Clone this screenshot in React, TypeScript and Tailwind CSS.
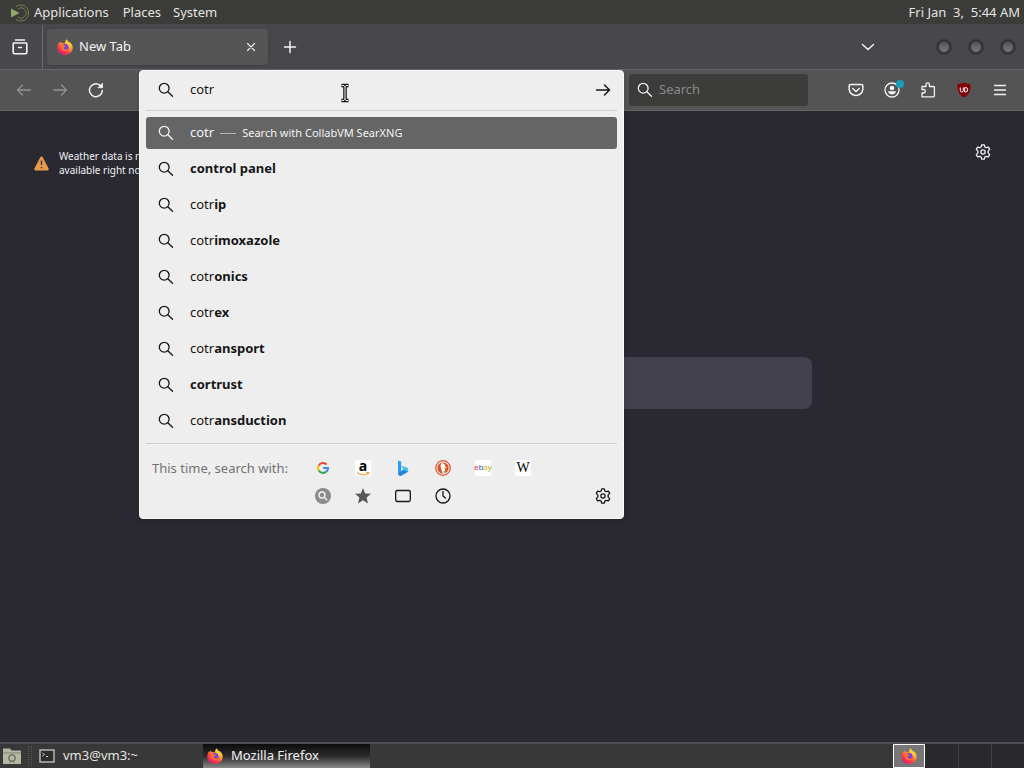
import { useState } from "react";
import type { ReactNode } from "react";

const engineRows = ["Google", "Amazon", "Bing", "DuckDuckGo", "eBay", "Wikipedia"];

const suggestions = [
  { typed: "", rest: "control panel" },
  { typed: "cotr", rest: "ip" },
  { typed: "cotr", rest: "imoxazole" },
  { typed: "cotr", rest: "onics" },
  { typed: "cotr", rest: "ex" },
  { typed: "cotr", rest: "ansport" },
  { typed: "", rest: "cortrust" },
  { typed: "cotr", rest: "ansduction" },
];

function Icon({ children, className = "size-4" }: { children: ReactNode; className?: string }) {
  return (
    <svg
      className={`shrink-0 ${className}`}
      viewBox="0 0 16 16"
      fill="none"
      stroke="currentColor"
      strokeWidth="1.3"
      strokeLinecap="round"
      strokeLinejoin="round"
      aria-hidden="true"
    >
      {children}
    </svg>
  );
}

function SearchIcon() {
  return (
    <Icon>
      <circle cx="6.2" cy="6.2" r="4.9" />
      <path d="M9.8 9.8L14.500 14.300" />
    </Icon>
  );
}

function GearIcon() {
  return (
    <Icon>
      <path d="M6.800.8h2.400l.7 2.200 1.300.7 2.200-.5 1.300 2.200-1.600 1.700v1.800l1.600 1.700-1.300 2.200-2.200-.5-1.300.7-.7 2.200H6.800l-.7-2.200-1.300-.7-2.200.5-1.300-2.200 1.600-1.700V7.100L1.300 5.400l1.300-2.200 2.200.5L6.100 3z" />
      <circle cx="8" cy="8" r="2.100" />
    </Icon>
  );
}

function FirefoxLogo({ className = "size-4" }: { className?: string }) {
  return (
    <svg className={`shrink-0 ${className}`} viewBox="0 0 16 16" aria-hidden="true">
      <defs>
        <linearGradient id="fox" x1="0.85" y1="0.05" x2="0.2" y2="0.95">
          <stop offset="0" stopColor="#fff04a" />
          <stop offset="0.35" stopColor="#ffa52b" />
          <stop offset="0.65" stopColor="#ff4540" />
          <stop offset="1" stopColor="#e6127c" />
        </linearGradient>
      </defs>
      <path
        d="M10 .3c.3 1.500 1.200 2.200 2.100 3.100l.4-.5C14.600 4.300 16 6.500 15.700 9.200 15.300 13 12 15.800 8 15.800 3.700 15.800.3 12.600.3 8.400c0-2.500.8-4.300 2-5.500l.3 1.300L4 2.500l.7 1.600c1.400-.3 2.300.1 3 .6C7.800 2.800 8.700 1.200 10 .3z"
        fill="url(#fox)"
      />
      <circle cx="8.200" cy="8.600" r="3.500" fill="#7542e5" />
      <path d="M3 6.200c1.300-.8 3-.6 4.300.4l1.500.4c-.2 1-1.500 1.100-2 1.500-.2 1.100.7 2 2 2 1.200 0 1.900-.7 3-.3-.7 1.600-2.300 2.200-3.900 2.200C5 12.400 3.200 9.700 3 6.200z" fill="#ff6a35" />
      <path d="M8.700 4.200c1.800.6 3.300 2 3.200 4.400l1.200-1.100c.1-2.200-1.700-3.500-2.400-5.200z" fill="#ffcf3c" />
    </svg>
  );
}

function EngineLogo({ name }: { name: string }) {
  if (name === "Google") {
    return (
      <svg className="size-3" viewBox="0 0 12 12" fill="none" strokeWidth="2" aria-hidden="true">
        <path d="M9.600 2.500A5 5 0 0 0 1.700 3.500" stroke="#ea4335" />
        <path d="M1.700 3.500a5 5 0 0 0 0 5" stroke="#fbbc05" />
        <path d="M1.700 8.500a5 5 0 0 0 7.300 1.400" stroke="#34a853" />
        <path d="M9 9.900A4.600 4.600 0 0 0 11 6H6.200" stroke="#4285f4" />
      </svg>
    );
  }
  if (name === "Amazon") {
    return (
      <span className="relative flex size-4 items-center justify-center bg-white">
        <span className="-mt-1 font-['Open_Sans',sans-serif] text-sm leading-4 font-bold text-black">a</span>
        <svg className="absolute inset-x-0 bottom-0 h-1 w-4" viewBox="0 0 16 4" fill="none" stroke="#f5a33a" strokeWidth="1.200" aria-hidden="true">
          <path d="M2 .6q6 4.200 11 .6M11.300.7l2.500-.2-.6 2" />
        </svg>
      </span>
    );
  }
  if (name === "Bing") {
    return (
      <svg className="size-4" viewBox="0 0 16 16" aria-hidden="true">
        <path d="M3 .5l3.200 1.200v9.600L3 13.500z" fill="#2b9df0" />
        <path d="M3 13.200l3.200-2.300 2.400-1.100-1.700-3.900 4.800 1.800c2 .9 2 3.600.3 4.900l-5.700 3.200C4.600 16.200 3 15 3 13.200z" fill="#2584dc" />
        <path d="M6.900 5.900l4.800 1.800c1.600.8 1.900 2.500 1.100 3.900L8.600 9.800z" fill="#3dc9e9" />
      </svg>
    );
  }
  if (name === "DuckDuckGo") {
    return (
      <svg className="size-4" viewBox="0 0 16 16" aria-hidden="true">
        <circle cx="8" cy="8" r="7.300" fill="#f5e6df" stroke="#d9593a" strokeWidth="1.200" />
        <circle cx="8" cy="8" r="5.600" fill="#d9532c" />
        <path d="M6.300 3.300c2.700-.3 4 1.200 4 3.500l1.600.8-2 1 .4 4.300-2.400.7C7 11.300 5.300 8 5.600 5.300z" fill="#fff" />
        <path d="M8.500 7.500l3.300.2-2.500 1.300z" fill="#f3b52c" />
        <path d="M8.500 11l2 .3-.3 1.500-1.500-.3z" fill="#65b04b" />
      </svg>
    );
  }
  if (name === "eBay") {
    return (
      <span className="flex size-4 items-center justify-center bg-white font-['Liberation_Sans',sans-serif] text-[8px] leading-4">
        <span className="text-[#e53238]">e</span>
        <span className="text-[#0064d2]">b</span>
        <span className="text-[#f5af02]">a</span>
        <span className="text-[#86b817]">y</span>
      </span>
    );
  }
  return (
    <span className="flex size-4 items-center justify-center bg-white font-['Liberation_Serif',serif] text-sm leading-4 text-black">
      W
    </span>
  );
}

function ToolbarButton({ label, children, disabled }: { label: string; children: ReactNode; disabled?: boolean }) {
  return (
    <button
      type="button"
      aria-label={label}
      disabled={disabled}
      className="relative flex h-8 w-9 shrink-0 items-center justify-center text-[#f2f2f2] disabled:text-[#929292]"
    >
      {children}
    </button>
  );
}

function DesktopPanel() {
  return (
    <header className="flex h-6 items-center justify-between bg-[#3b3b39] pt-px pr-1 pl-2 text-[#e4e4e0]">
      <nav className="flex items-center">
        <svg className="mr-1 h-5 w-[22px]" viewBox="0 0 22 20" fill="none" aria-hidden="true">
          <path d="M3 5.500l8.500 4.500L3 14.500z" fill="#93a66c" />
          <path d="M8 3.500a8 8 0 1 1 0 13" stroke="#718252" strokeWidth="1" />
          <path d="M10 6a5 5 0 1 1 0 8" stroke="#718252" strokeWidth="1" />
        </svg>
        <button type="button" className="mr-3.5">Applications</button>
        <button type="button" className="mr-3">Places</button>
        <button type="button">System</button>
      </nav>
      <time className="whitespace-pre">Fri Jan  3,  5:44 AM</time>
    </header>
  );
}

function TabBar() {
  return (
    <div className="flex h-[45px] items-center bg-[#48474c] pt-px text-[#f2f2f2]">
      <div className="mr-1 flex h-full w-[43px] shrink-0 items-center justify-center border-r border-[#69686d] pr-0.5">
        <button type="button" aria-label="Firefox View">
          <Icon>
            <path d="M3.500 1h9M1.500 4h13M2.500 4h11a1.300 1.300 0 0 1 1.300 1.300v8a1.500 1.500 0 0 1-1.500 1.500H2.700a1.500 1.500 0 0 1-1.500-1.500v-8A1.300 1.300 0 0 1 2.500 4zM6.500 8.500h3" strokeWidth="1.600" />
          </Icon>
        </button>
      </div>
      <div className="flex h-9 w-[221px] items-center rounded-sm bg-[#555555] px-2.5 shadow-sm">
        <FirefoxLogo />
        <span className="ml-1.5 flex-1">New Tab</span>
        <button type="button" aria-label="Close tab">
          <Icon className="size-3.5">
            <path d="M4 4l8 8M12 4l-8 8" />
          </Icon>
        </button>
      </div>
      <button type="button" aria-label="New tab" className="ml-3.5">
        <Icon>
          <path d="M8 2.500v11M2.500 8h11" strokeWidth="1.500" />
        </Icon>
      </button>
      <button type="button" aria-label="List all tabs" className="mr-[60px] ml-auto">
        <Icon>
          <path d="M2.500 5.500L8 10.500l5.500-5" strokeWidth="1.500" />
        </Icon>
      </button>
      <div className="flex gap-4 pr-2">
        {["Minimize", "Maximize", "Close"].map((label) => (
          <button
            key={label}
            type="button"
            aria-label={label}
            className="size-4 rounded-full border-3 border-[#37363a] bg-linear-to-b from-[#58585a] to-[#77767a]"
          />
        ))}
      </div>
    </div>
  );
}

function UrlPopup() {
  const [query, setQuery] = useState("cotr");

  return (
    <div className="absolute inset-x-0 top-0 z-10 rounded-sm border border-[#fafafa] bg-[#eeeeee] px-1.5 text-[#161616] shadow-md">
      <form className="flex h-10 items-center border-b border-[#cfcfcf] px-3 pb-px" onSubmit={(e) => e.preventDefault()}>
        <SearchIcon />
        <input
          aria-label="Search or enter address"
          className="ml-4 min-w-0 flex-1 bg-transparent outline-none"
          value={query}
          onChange={(e) => setQuery(e.target.value)}
        />
        <button type="submit" aria-label="Go" className="-mr-1.5">
          <Icon>
            <path d="M1.500 8h13M9.500 3l5 5-5 5" strokeWidth="1.500" />
          </Icon>
        </button>
      </form>
      {/* I-beam pointer */}
      <svg className="absolute top-3 left-[200px] h-5 w-2.5" viewBox="0 0 10 20" fill="none" aria-hidden="true">
        <path d="M1.500 2.500h2.500l1 1 1-1h2.500M5 3v14M1.500 17.500h2.500l1-1 1 1h2.500" stroke="#111" strokeWidth="3.500" />
        <path d="M2 2.500h2l1 1 1-1h2M5 3v14M2 17.500h2l1-1 1 1h2" stroke="#fff" strokeWidth="1" />
      </svg>
      <ul className="border-b border-[#cfcfcf] py-1">
        <li className="my-0.5 flex h-8 items-center rounded-[3px] bg-[#656565] px-3 text-[#f4f4f4]">
          <SearchIcon />
          <span className="ml-4">cotr</span>
          <span className="mx-1.5 h-px w-4 bg-[#b5b5b5]" />
          <span className="text-[11px]">Search with CollabVM SearXNG</span>
        </li>
        {suggestions.map((s) => (
          <li key={s.rest} className="flex h-9 items-center px-3">
            <SearchIcon />
            <span className="ml-4">
              {s.typed}
              <b>{s.rest}</b>
            </span>
          </li>
        ))}
      </ul>
      <div className="flex items-start pt-2.5 pb-2">
        <span className="w-[157px] shrink-0 pl-1.5 leading-7 text-[#727272]">This time, search with:</span>
        <div className="flex-1">
          <div className="flex h-7">
            {engineRows.map((name) => (
              <button key={name} type="button" aria-label={name} className="flex w-10 items-center justify-center">
                <EngineLogo name={name} />
              </button>
            ))}
          </div>
          <div className="flex h-7">
            <button type="button" aria-label="SearXNG" className="flex w-10 items-center justify-center">
              <svg className="size-4" viewBox="0 0 16 16" fill="none" stroke="#f2f2f2" strokeWidth="1.400" aria-hidden="true">
                <circle cx="8" cy="8" r="8" fill="#8b8b8b" stroke="none" />
                <circle cx="7" cy="7" r="3" />
                <path d="M9.200 9.200l3 3" />
              </svg>
            </button>
            <button type="button" aria-label="Bookmarks" className="flex w-10 items-center justify-center text-[#585858]">
              <svg className="size-4" viewBox="0 0 16 16" fill="currentColor" aria-hidden="true">
                <path d="M8 0l2.200 5.400 5.800.4-4.400 3.800L13 15.500l-5-3.200-5 3.200 1.400-5.900L0 5.800l5.800-.4z" />
              </svg>
            </button>
            <button type="button" aria-label="Tabs" className="flex w-10 items-center justify-center">
              <Icon>
                <rect x="0.700" y="2.500" width="14.600" height="11" rx="1.500" />
              </Icon>
            </button>
            <button type="button" aria-label="History" className="flex w-10 items-center justify-center">
              <Icon>
                <circle cx="8" cy="8" r="7" />
                <path d="M8 3.500V8l2.500 2" />
              </Icon>
            </button>
            <button type="button" aria-label="Search settings" className="mr-1.5 ml-auto">
              <GearIcon />
            </button>
          </div>
        </div>
      </div>
    </div>
  );
}

function NavBar() {
  return (
    <div className="flex h-[42px] items-center border-t border-b border-[#646464] bg-[#545454] px-1.5">
      <ToolbarButton label="Back" disabled>
        <Icon>
          <path d="M14.500 8h-13M6.500 3l-5 5 5 5" />
        </Icon>
      </ToolbarButton>
      <ToolbarButton label="Forward" disabled>
        <Icon>
          <path d="M1.500 8h13M9.500 3l5 5-5 5" />
        </Icon>
      </ToolbarButton>
      <ToolbarButton label="Reload">
        <Icon>
          <path d="M14.300 8.500A6.400 6.400 0 1 1 12 3.300l2 1.700" strokeWidth="1.500" />
          <path d="M14.500 1.500v4.200h-4.200z" fill="currentColor" strokeWidth="0.800" />
        </Icon>
      </ToolbarButton>
      <div className="relative ml-[25px] h-full min-w-0 flex-1">
        <UrlPopup />
      </div>
      <label className="mr-[30px] ml-[5px] flex h-8 w-[179px] items-center rounded-[3px] bg-[#3c3c3b] px-2 text-[#f2f2f2]">
        <SearchIcon />
        <input
          aria-label="Search"
          placeholder="Search"
          className="ml-1.5 w-full min-w-0 bg-transparent outline-none placeholder:text-[#8b8b8b]"
        />
      </label>
      <ToolbarButton label="Save to Pocket">
        <Icon>
          <path d="M2.500 2.500h11a1.300 1.300 0 0 1 1.300 1.300v3.400a6.800 6.300 0 0 1-13.600 0V3.800a1.300 1.300 0 0 1 1.300-1.300zM4.800 6.500L8 9.500l3.200-3" strokeWidth="1.500" />
        </Icon>
      </ToolbarButton>
      <ToolbarButton label="Account">
        <Icon>
          <circle cx="8" cy="8" r="7" />
          <circle cx="8" cy="6" r="2.300" fill="currentColor" stroke="none" />
          <path d="M3.800 9.300h8.400a4.400 4.400 0 0 1-8.400 0z" fill="currentColor" stroke="none" />
        </Icon>
        <span className="absolute top-1.5 right-1.5 size-2 rounded-full bg-[#159fbb]" />
      </ToolbarButton>
      <ToolbarButton label="Extensions">
        <Icon>
          <path d="M2 14.800V11h1.500a1.700 1.700 0 0 0 0-3.500H2V4.500h4V2.600a1.700 1.700 0 0 1 3.400 0v1.900h4a1 1 0 0 1 1 1v8.300a1 1 0 0 1-1 1z" />
        </Icon>
      </ToolbarButton>
      <ToolbarButton label="uBlock Origin">
        <svg className="size-4" viewBox="0 0 16 16" aria-hidden="true">
          <path d="M8 .5c2 1.300 4 1.700 6.500 1.700 0 6.500-.8 10-6.500 13.300C2.300 12.200 1.500 8.700 1.500 2.200 4 2.200 6 1.800 8 .5z" fill="#850006" />
          <path d="M4.300 5.500v3a1.500 1.500 0 0 0 3 0v-3M8.700 5.500v4.500h.8a2.200 2.200 0 0 0 0-4.500z" fill="none" stroke="#fff" strokeWidth="1" />
        </svg>
      </ToolbarButton>
      <ToolbarButton label="Open menu">
        <Icon>
          <path d="M2.500 3.500h11M2.500 8h11M2.500 12.500h11" />
        </Icon>
      </ToolbarButton>
    </div>
  );
}

function NewTabPage() {
  return (
    <main className="flex-1 bg-[#2a2931] text-[#f0f0f2]">
      <div className="flex items-start justify-between pt-8 pr-[33px] pl-[34px]">
        <div className="flex items-center gap-2.5 pt-1.5">
          <svg className="size-[15px]" viewBox="0 0 15 15" aria-hidden="true">
            <path d="M7.500.5c.5 0 .9.300 1.100.6l6 11.500c.4.900-.2 1.900-1.100 1.900h-12c-.9 0-1.500-1-1.100-1.900l6-11.500c.2-.3.600-.6 1.100-.6z" fill="#e69a4c" />
            <path d="M7.500 4.500v4.500M7.500 11v1.300" stroke="#3a3030" strokeWidth="1.400" />
          </svg>
          <p className="w-[110px] text-[10px] leading-[14px]">Weather data is not available right now.</p>
        </div>
        <button type="button" aria-label="Personalize new tab" className="pt-px">
          <GearIcon />
        </button>
      </div>
      <input
        aria-label="Search the web"
        className="mx-auto mt-[180px] block h-[52px] w-full max-w-[600px] rounded-lg bg-[#42414d] px-4 outline-none"
      />
    </main>
  );
}

function Taskbar() {
  return (
    <footer className="flex h-[26px] items-center border-t-2 border-[#4c4b50] bg-[#383838] text-[#e4e4e0]">
      <button type="button" aria-label="Files" className="ml-0.5">
        <svg className="h-[18px] w-5" viewBox="0 0 20 18" aria-hidden="true">
          <path d="M1 1.500h7l1.500 2H19v13.500H1z" fill="#b4b9a4" />
          <path d="M1 6h18" stroke="#7f8573" />
          <circle cx="10" cy="11" r="3.200" fill="none" stroke="#6b715f" strokeWidth="1.300" />
          <path d="M7.500 15.500q2.500-2.500 5 0" fill="none" stroke="#6b715f" />
        </svg>
      </button>
      <span className="ml-1.5 h-5 w-1 border-x border-dotted border-[#5b5b5b]" />
      <button type="button" className="ml-[7px] flex w-[162px] items-center">
        <svg className="h-3.5 w-4" viewBox="0 0 16 14" fill="none" aria-hidden="true">
          <rect x="1" y="1" width="14" height="12" fill="#2d2d2d" stroke="#c9c9c9" strokeWidth="1.300" />
          <path d="M3.500 4l2 1.500-2 1.500M7 7.500h2" stroke="#c9c9c9" />
        </svg>
        <span className="ml-2">vm3@vm3:~</span>
      </button>
      <button
        type="button"
        className="ml-0.5 flex h-full w-[167px] items-center bg-linear-to-b from-[#0c0c0c] via-[#2c2c2c] to-[#8a8a8a] pl-1 text-[#f0f0f0]"
      >
        <FirefoxLogo />
        <span className="ml-2">Mozilla Firefox</span>
      </button>
      <div className="ml-auto flex h-full bg-[#29292b]">
        <button type="button" aria-label="Workspace 1" className="flex w-8 items-center justify-center border border-white bg-[#777777]">
          <FirefoxLogo />
        </button>
        <button type="button" aria-label="Workspace 2" className="w-[34px] border-r border-[#414143]" />
        <button type="button" aria-label="Workspace 3" className="w-[33px] border-r border-[#414143]" />
        <button type="button" aria-label="Workspace 4" className="w-8" />
      </div>
    </footer>
  );
}

export default function App() {
  return (
    <div className="flex min-h-screen flex-col font-['Noto_Sans',sans-serif] text-[13px]">
      <DesktopPanel />
      <TabBar />
      <NavBar />
      <NewTabPage />
      <Taskbar />
    </div>
  );
}
